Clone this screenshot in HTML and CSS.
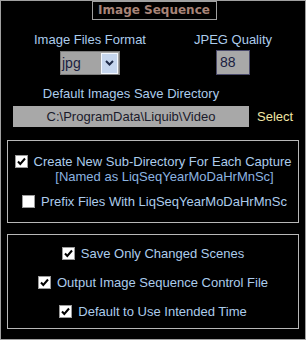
FILE: index.html
```html
<!DOCTYPE html>
<html>
<head>
<meta charset="utf-8">
<link rel="stylesheet" href="styles.css">
</head>
<body>
<div class="panel">
  <div class="title-row"><div class="title">Image Sequence</div></div>

  <div class="format-row">
    <div class="col col-left">
      <div class="label">Image Files Format</div>
      <div class="dropdown">
        <span class="dd-value">jpg</span>
        <span class="dd-btn">
          <svg width="9" height="6" viewBox="0 0 9 6"><path d="M1 1 L4.5 4.5 L8 1" fill="none" stroke="#1e2a48" stroke-width="2"/></svg>
        </span>
      </div>
    </div>
    <div class="col col-right">
      <div class="label">JPEG Quality</div>
      <div class="numbox">88</div>
    </div>
  </div>

  <div class="label dir-label">Default Images Save Directory</div>
  <div class="path-row">
    <div class="path">C:\ProgramData\Liquib\Video</div>
    <div class="select">Select</div>
  </div>

  <div class="group group-one">
    <div class="row">
      <span class="cb checked"><svg width="11" height="11" viewBox="0 0 11 11"><path d="M2 5.5 L4.3 8 L9 2.5" fill="none" stroke="#000" stroke-width="2"/></svg></span>
      <div class="cb-text">
        <div class="label">Create New Sub-Directory For Each Capture</div>
        <div class="label named">[Named as LiqSeqYearMoDaHrMnSc]</div>
      </div>
    </div>
    <div class="row row-prefix">
      <span class="cb"></span>
      <span class="label">Prefix Files With LiqSeqYearMoDaHrMnSc</span>
    </div>
  </div>

  <div class="group group-two">
    <div class="row">
      <span class="cb checked"><svg width="11" height="11" viewBox="0 0 11 11"><path d="M2 5.5 L4.3 8 L9 2.5" fill="none" stroke="#000" stroke-width="2"/></svg></span>
      <span class="label">Save Only Changed Scenes</span>
    </div>
    <div class="row">
      <span class="cb checked"><svg width="11" height="11" viewBox="0 0 11 11"><path d="M2 5.5 L4.3 8 L9 2.5" fill="none" stroke="#000" stroke-width="2"/></svg></span>
      <span class="label">Output Image Sequence Control File</span>
    </div>
    <div class="row">
      <span class="cb checked"><svg width="11" height="11" viewBox="0 0 11 11"><path d="M2 5.5 L4.3 8 L9 2.5" fill="none" stroke="#000" stroke-width="2"/></svg></span>
      <span class="label">Default to Use Intended Time</span>
    </div>
  </div>
</div>
</body>
</html>
```

FILE: styles.css
```css
* { box-sizing: border-box; }
html, body { margin: 0; padding: 0; background: #000; }
body { width: 306px; height: 340px; overflow: hidden; }

.panel {
  width: 306px;
  height: 340px;
  border: 1px solid #a0a0a0;
  background: #000;
  font-family: "Liberation Sans", Arial, sans-serif;
  font-size: 13px;
  line-height: 15px;
  display: flex;
  flex-direction: column;
}

.title-row { display: flex; justify-content: center; }
.title {
  width: 125px;
  height: 19px;
  margin-left: 2px;
  border: 1px solid #a0a0a0;
  font-family: "DejaVu Sans", Verdana, sans-serif;
  font-weight: bold;
  font-size: 12px;
  line-height: 17px;
  color: #a88478;
  text-align: center;
}

.label { color: #acccec; white-space: nowrap; }

.format-row { display: flex; margin-top: 12px; }
.col { display: flex; flex-direction: column; align-items: center; }
.col-left { width: 178px; gap: 4px; }
.col-right { width: 108px; gap: 3px; }

.dropdown {
  width: 60px;
  height: 24px;
  background: #a4a4a4;
  border: 1px solid #7c7c7c;
  display: flex;
  align-items: center;
  justify-content: space-between;
  padding: 0 1px 0 1px;
}
.dd-value { color: #1a2040; font-size: 14px; line-height: 16px; }
.dd-btn {
  width: 17px;
  height: 21px;
  background: #c6d6ee;
  border: 1px solid #f4f8ff;
  display: flex;
  align-items: center;
  justify-content: center;
}

.numbox {
  width: 34px;
  height: 25px;
  background: #a8a8a8;
  border: 1px solid #4a4a6a;
  color: #1a2040;
  font-size: 14px;
  line-height: 23px;
  padding-left: 3px;
}

.dir-label { margin-top: 11px; text-align: center; width: 260px; }

.path-row { display: flex; align-items: center; gap: 8px; margin-top: 5px; padding-left: 12px; }
.path {
  width: 236px;
  height: 21px;
  background: #a8a8a8;
  color: #1a1a2a;
  text-align: center;
  line-height: 21px;
}
.select { color: #f0e6a6; }

.group {
  margin: 0 6px;
  border: 1px solid #b8b8b8;
  display: flex;
  flex-direction: column;
}
.group-one { margin-top: 13px; height: 83px; padding-top: 13px; gap: 10px; }
.group-two { margin-top: 11px; height: 95px; padding-top: 11px; gap: 14px; }

.row { display: flex; justify-content: center; align-items: flex-start; gap: 6px; }
.row > .label { line-height: 15px; }
.cb {
  width: 13px;
  height: 13px;
  margin-top: 1px;
  background: #fff;
  border: 1px solid #9a9a9a;
  display: flex;
  align-items: center;
  justify-content: center;
  flex: none;
}
.cb-text { display: flex; flex-direction: column; align-items: center; }
.named { color: #8cb4e0; margin-left: 4px; }
.row-prefix { margin-left: 3px; }
```
